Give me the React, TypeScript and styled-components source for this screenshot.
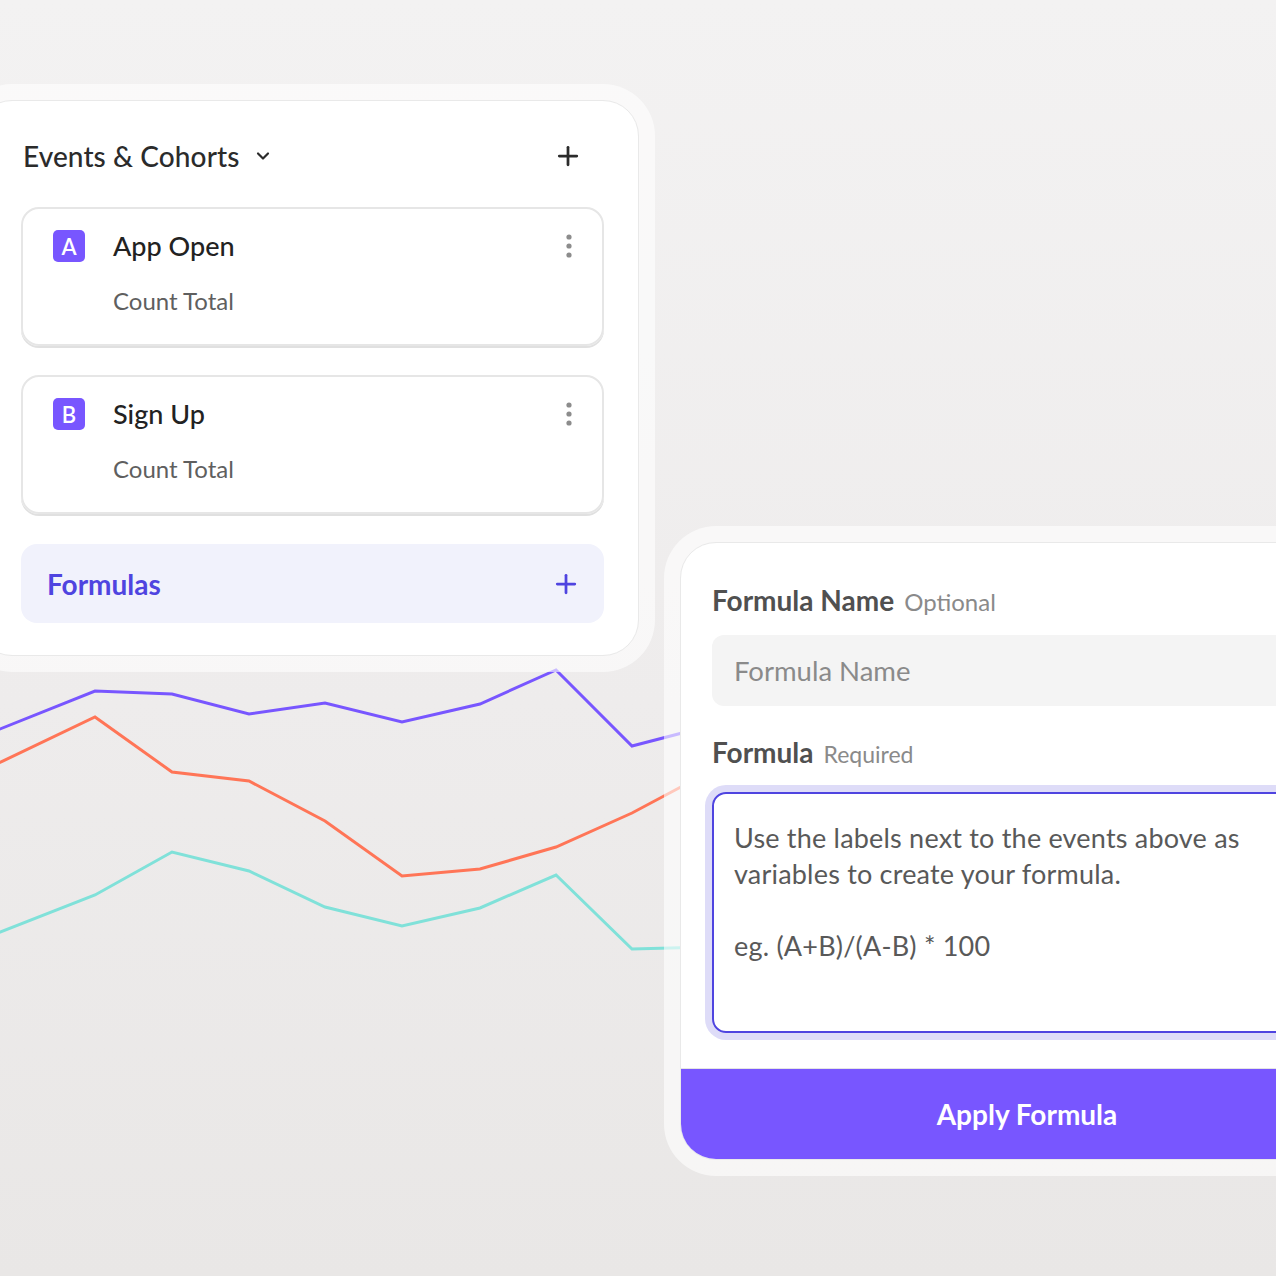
import React, { FunctionComponent } from 'react';
import styled, { createGlobalStyle } from 'styled-components';
import { ChevronDown, Plus } from 'lucide-react';

const fontStack = `Lato, 'Liberation Sans', sans-serif`;
const brandPurple = '#7856ff';
const brandIndigo = '#4f44e0';

const GlobalStyle = createGlobalStyle`
  html, body {
    margin: 0;
    padding: 0;
    background: #eeecec;
  }
  body {
    font-family: ${fontStack};
    -webkit-font-smoothing: antialiased;
  }
`;

const Stage = styled.div`
  position: relative;
  width: 1276px;
  height: 1276px;
  overflow: hidden;
  display: grid;
  grid-template-columns: 664px 1fr;
  align-items: start;
  background: linear-gradient(180deg, #f3f2f2 0%, #eeecec 55%, #e9e7e6 100%);
`;

const Chart = styled.svg`
  position: absolute;
  inset: 0;
  width: 100%;
  height: 100%;
  z-index: 0;
  pointer-events: none;
`;

const Frame = styled.div<{ $top: number; $left?: number; $width: number }>`
  position: relative;
  z-index: 1;
  margin-top: ${({ $top }) => $top}px;
  margin-left: ${({ $left = 0 }) => $left}px;
  width: ${({ $width }) => $width}px;
  padding: 16px;
  box-sizing: border-box;
  border-radius: 52px;
  background: rgba(255, 255, 255, 0.6);
`;

const Sheet = styled.div`
  background: #fff;
  border: 1px solid #e9e9e9;
  border-radius: 36px;
  overflow: hidden;
`;

const EventsBody = styled.div`
  padding: 35px 34px 32px 44px;
  display: flex;
  flex-direction: column;
`;

const Header = styled.div`
  height: 40px;
  padding: 0 21px 0 2px;
  margin-bottom: 31px;
  display: flex;
  align-items: center;
  justify-content: space-between;
  color: #2b2b2b;
`;

const HeaderTitle = styled.div`
  display: flex;
  align-items: center;
  gap: 13px;
  font-size: 28px;
  font-weight: 500;
  letter-spacing: 0.1px;
`;

const EventCard = styled.div`
  display: grid;
  grid-template-columns: 32px 1fr auto;
  column-gap: 28px;
  row-gap: 25px;
  align-items: center;
  padding: 21px 21px 29px 30px;
  margin-bottom: 29px;
  border: 2px solid #e6e6e6;
  border-radius: 18px;
  box-shadow: 0 2px 0 #e0e0e0;
`;

const Badge = styled.div`
  width: 32px;
  height: 32px;
  border-radius: 5px;
  background: ${brandPurple};
  color: #fff;
  font-size: 22px;
  font-weight: 600;
  display: flex;
  align-items: center;
  justify-content: center;
`;

const EventName = styled.div`
  font-size: 27px;
  line-height: 32px;
  color: #222;
  font-weight: 500;
`;

const EventMeasure = styled.div`
  grid-column: 2 / 4;
  font-size: 24px;
  line-height: 28px;
  color: #5f5f5f;
`;

const Kebab = styled.svg`
  width: 24px;
  height: 28px;
`;

const FormulasRow = styled.div`
  height: 79px;
  padding: 0 23px 0 26px;
  margin-top: 1px;
  box-sizing: border-box;
  border-radius: 16px;
  background: #f1f2fc;
  display: flex;
  align-items: center;
  justify-content: space-between;
  color: ${brandIndigo};
  font-size: 28px;
  font-weight: 700;
`;

const FormBody = styled.div`
  padding: 40px 0 35px 31px;
  display: flex;
  flex-direction: column;
`;

const Label = styled.div<{ $gap: number }>`
  display: flex;
  align-items: baseline;
  gap: 10px;
  height: 32px;
  margin-top: ${({ $gap }) => $gap}px;
  color: #505050;
  font-size: 28px;
  font-weight: 700;
`;

const LabelHint = styled.span<{ $size: number }>`
  font-size: ${({ $size }) => $size}px;
  font-weight: 400;
  color: #8a8a8a;
`;

const NameInput = styled.input`
  width: 700px;
  height: 71px;
  margin-top: 20px;
  padding: 0 22px;
  box-sizing: border-box;
  border: none;
  border-radius: 12px;
  background: #f4f4f4;
  font-family: ${fontStack};
  font-size: 27.5px;
  color: #333;
  outline: none;
  &::placeholder {
    color: #8a8a8a;
  }
`;

const FormulaBox = styled.div`
  width: 700px;
  height: 241px;
  margin-top: 25px;
  padding: 26px 20px;
  box-sizing: border-box;
  border: 2px solid ${brandIndigo};
  border-radius: 14px;
  box-shadow: 0 0 0 7px #dedcf8;
  color: #595959;
  font-size: 27px;
  line-height: 36px;
  letter-spacing: 0.2px;
`;

const HintLine = styled.div`
  min-height: 36px;
  white-space: nowrap;
`;

const ApplyButton = styled.button`
  display: block;
  width: 100%;
  height: 91px;
  margin-top: 0;
  border: none;
  border-top: 1px solid #e4e4e4;
  background: ${brandPurple};
  color: #fff;
  font-family: ${fontStack};
  font-size: 28px;
  font-weight: 700;
  cursor: pointer;
`;

type Series = { color: string; points: [number, number][] };

const series: Series[] = [
  {
    color: '#7856ff',
    points: [
      [-20, 737], [95, 691], [172, 694], [249, 714], [325, 703], [402, 722],
      [480, 704], [556, 670], [632, 746], [709, 726], [786, 700],
    ],
  },
  {
    color: '#ff7557',
    points: [
      [-20, 772], [95, 717], [172, 772], [249, 781], [325, 821], [402, 876],
      [480, 869], [556, 847], [632, 813], [709, 772], [786, 740],
    ],
  },
  {
    color: '#80e1d9',
    points: [
      [-20, 940], [95, 895], [172, 852], [249, 871], [325, 907], [402, 926],
      [480, 908], [556, 875], [632, 949], [709, 947], [786, 930],
    ],
  },
];

const KebabIcon: FunctionComponent = () => (
  <Kebab viewBox="0 0 24 28">
    <circle cx="12" cy="5" r="2.6" fill="#8c8c8c" />
    <circle cx="12" cy="14" r="2.6" fill="#8c8c8c" />
    <circle cx="12" cy="23" r="2.6" fill="#8c8c8c" />
  </Kebab>
);

const events = [
  { letter: 'A', name: 'App Open', measure: 'Count Total' },
  { letter: 'B', name: 'Sign Up', measure: 'Count Total' },
];

const App: FunctionComponent = () => (
  <>
    <GlobalStyle />
    <Stage>
      <Chart viewBox="0 0 1276 1276">
        {series.map(({ color, points }) => (
          <polyline
            key={color}
            points={points.map(([x, y]) => `${x},${y}`).join(' ')}
            fill="none"
            stroke={color}
            strokeWidth={3}
            strokeLinejoin="miter"
          />
        ))}
      </Chart>

      <Frame $top={84} $left={-40} $width={695}>
        <Sheet>
          <EventsBody>
            <Header>
              <HeaderTitle>
                Events &amp; Cohorts
                <ChevronDown size={20} strokeWidth={2.6} />
              </HeaderTitle>
              <Plus size={30} strokeWidth={2.2} />
            </Header>

            {events.map((event) => (
              <EventCard key={event.letter}>
                <Badge>{event.letter}</Badge>
                <EventName>{event.name}</EventName>
                <KebabIcon />
                <EventMeasure>{event.measure}</EventMeasure>
              </EventCard>
            ))}

            <FormulasRow>
              Formulas
              <Plus size={30} strokeWidth={2.2} />
            </FormulasRow>
          </EventsBody>
        </Sheet>
      </Frame>

      <Frame $top={526} $width={726}>
        <Sheet>
          <FormBody>
            <Label $gap={0}>
              Formula Name
              <LabelHint $size={24}>Optional</LabelHint>
            </Label>
            <NameInput placeholder="Formula Name" />

            <Label $gap={29}>
              Formula
              <LabelHint $size={23}>Required</LabelHint>
            </Label>
            <FormulaBox>
              <HintLine>Use the labels next to the events above as</HintLine>
              <HintLine>variables to create your formula.</HintLine>
              <HintLine />
              <HintLine>eg. (A+B)/(A-B) * 100</HintLine>
            </FormulaBox>
          </FormBody>
          <ApplyButton>Apply Formula</ApplyButton>
        </Sheet>
      </Frame>
    </Stage>
  </>
);

export default App;
